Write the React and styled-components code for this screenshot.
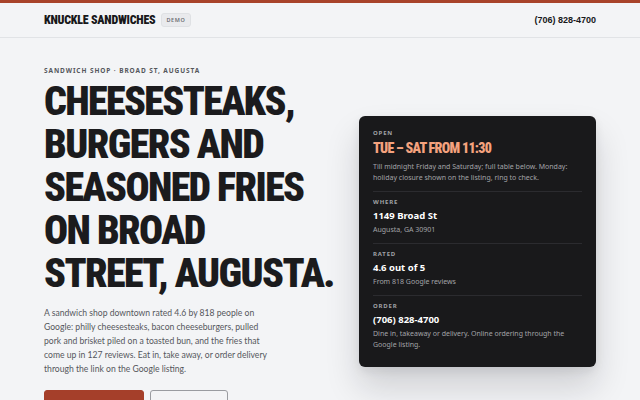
import React from "react";
import styled, { createGlobalStyle } from "styled-components";

const Global = createGlobalStyle`
  html, body { margin: 0; padding: 0; background: #f3f4f6; }
  body { font-family: "Noto Sans", "Open Sans", sans-serif; color: #1b1b1d; overflow: hidden; }
  * { box-sizing: border-box; }
`;

const display = `"Roboto Condensed", "Roboto", "DejaVu Sans Condensed", sans-serif`;

const Header = styled.header`
  border-top: 3px solid #a8432b;
  border-bottom: 1px solid #e1e3e6;
  background: #f3f4f6;
`;

const HeaderInner = styled.div`
  max-width: 552px;
  margin: 0 auto;
  height: 34px;
  display: flex;
  align-items: center;
  justify-content: space-between;
`;

const Brand = styled.div`
  display: flex;
  align-items: center;
  gap: 6px;
`;

const Logo = styled.span`
  font-family: ${display};
  font-weight: 900;
  font-size: 12px;
  letter-spacing: -0.02em;
  color: #18181a;
`;

const Badge = styled.span`
  font-size: 5.5px;
  font-weight: 600;
  letter-spacing: 0.12em;
  color: #6b6d72;
  background: #e9eaed;
  border: 1px solid #dfe1e4;
  border-radius: 3px;
  padding: 2px 4px;
`;

const Phone = styled.span`
  font-family: "Liberation Sans", Arial, sans-serif;
  font-weight: 700;
  font-size: 9px;
  color: #18181a;
`;

const Main = styled.main`
  max-width: 552px;
  margin: 0 auto;
  padding-top: 28px;
  display: grid;
  grid-template-columns: minmax(0, 1fr) 237px;
  column-gap: 18px;
  align-items: center;
`;

const Left = styled.div`
  display: flex;
  flex-direction: column;
  min-width: 0;
`;

const Eyebrow = styled.div`
  font-size: 6.5px;
  font-weight: 700;
  letter-spacing: 0.14em;
  color: #55575c;
  text-transform: uppercase;
  margin-bottom: 5px;
`;

const Title = styled.h1`
  margin: 0;
  font-family: ${display};
  font-weight: 900;
  font-size: 40px;
  line-height: 43px;
  letter-spacing: -0.04em;
  white-space: nowrap;
  color: #1b1b1d;
`;

const Lede = styled.p`
  margin: 11px 0 0;
  font-family: "Lato", "Noto Sans", sans-serif;
  font-size: 8.6px;
  line-height: 14px;
  color: #55575c;
  white-space: nowrap;
`;

const Actions = styled.div`
  display: flex;
  gap: 6px;
  margin-top: 14px;
`;

const Button = styled.a`
  height: 32px;
  padding: 0 10px;
  display: inline-flex;
  align-items: center;
  justify-content: center;
  border-radius: 3px;
  font-size: 9px;
  font-weight: 700;
  text-decoration: none;
  width: ${(p) => (p.$primary ? "100px" : "78px")};
  background: ${(p) => (p.$primary ? "#a53f2a" : "transparent")};
  color: ${(p) => (p.$primary ? "#fff" : "#1b1b1d")};
  border: 1px solid ${(p) => (p.$primary ? "#a53f2a" : "#9a9ca1")};
`;

const Card = styled.aside`
  background: #19191b;
  border-radius: 6px;
  padding: 7px 14px 9px;
  margin-bottom: 5px;
  box-shadow: 0 20px 34px rgba(20, 20, 30, 0.16), 0 4px 10px rgba(20, 20, 30, 0.08);
  color: #fff;
`;

const Section = styled.div`
  padding: 6px 0 8px;
  border-top: ${(p) => (p.$first ? "none" : "1px solid #2b2b2f")};
`;

const Label = styled.div`
  font-size: 6px;
  font-weight: 700;
  letter-spacing: 0.14em;
  color: #a0a1a6;
  text-transform: uppercase;
  margin-bottom: 3px;
`;

const Hours = styled.div`
  font-family: ${display};
  font-weight: 900;
  font-size: 14px;
  line-height: 17px;
  letter-spacing: -0.05em;
  color: #f4a27e;
  margin-bottom: 4px;
`;

const Value = styled.div`
  font-size: 9.5px;
  font-weight: 700;
  color: #ffffff;
  line-height: 13px;
  margin-bottom: 2px;
`;

const Note = styled.div`
  font-size: 7px;
  line-height: 11px;
  color: #a3a4a8;
`;

export default function App() {
  return (
    <>
      <Global />
      <Header>
        <HeaderInner>
          <Brand>
            <Logo>KNUCKLE SANDWICHES</Logo>
            <Badge>DEMO</Badge>
          </Brand>
          <Phone>(706) 828-4700</Phone>
        </HeaderInner>
      </Header>
      <Main>
        <Left>
          <Eyebrow>Sandwich shop · Broad St, Augusta</Eyebrow>
          <Title>
            CHEESESTEAKS,
            <br />
            BURGERS AND
            <br />
            SEASONED FRIES
            <br />
            ON BROAD
            <br />
            STREET, AUGUSTA.
          </Title>
          <Lede>
            A sandwich shop downtown rated 4.6 by 818 people on
            <br />
            Google: philly cheesesteaks, bacon cheeseburgers, pulled
            <br />
            pork and brisket piled on a toasted bun, and the fries that
            <br />
            come up in 127 reviews. Eat in, take away, or order delivery
            <br />
            through the link on the Google listing.
          </Lede>
          <Actions>
            <Button $primary href="#">Call to order</Button>
            <Button href="#">See hours</Button>
          </Actions>
        </Left>
        <Card>
          <Section $first>
            <Label>Open</Label>
            <Hours>TUE – SAT FROM 11:30</Hours>
            <Note>
              Till midnight Friday and Saturday; full table below. Monday: holiday
              closure shown on the listing, ring to check.
            </Note>
          </Section>
          <Section>
            <Label>Where</Label>
            <Value>1149 Broad St</Value>
            <Note>Augusta, GA 30901</Note>
          </Section>
          <Section>
            <Label>Rated</Label>
            <Value>4.6 out of 5</Value>
            <Note>From 818 Google reviews</Note>
          </Section>
          <Section>
            <Label>Order</Label>
            <Value>(706) 828-4700</Value>
            <Note>
              Dine in, takeaway or delivery. Online ordering through the Google
              listing.
            </Note>
          </Section>
        </Card>
      </Main>
    </>
  );
}
